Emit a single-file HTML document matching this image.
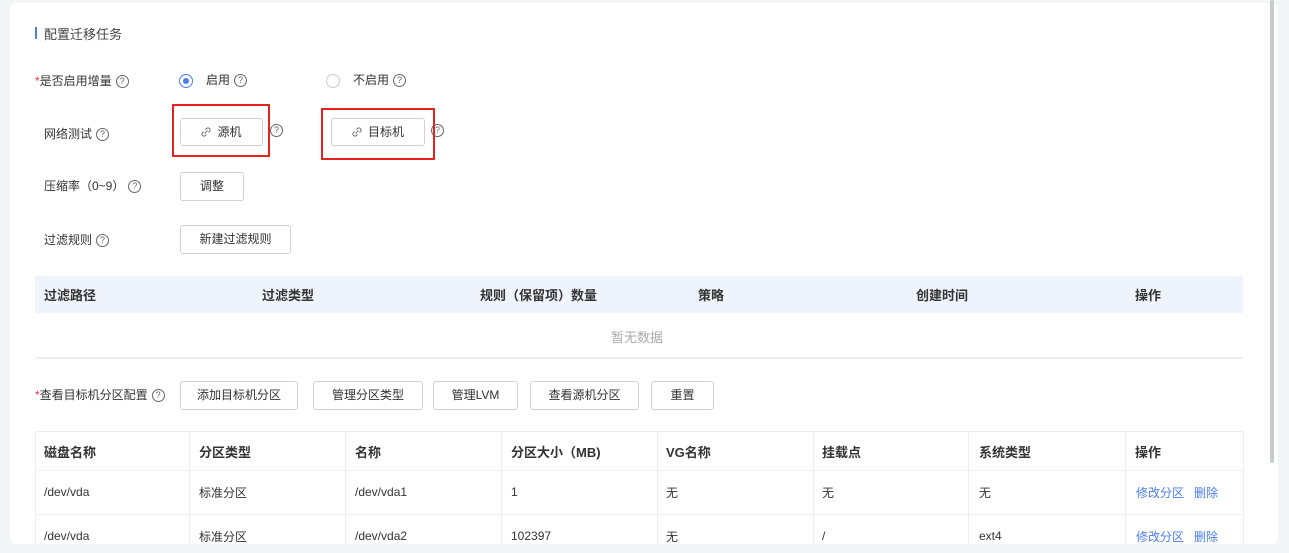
<!DOCTYPE html>
<html><head><meta charset="utf-8"><style>
body{margin:0;width:1289px;height:553px;background:#f4f5f7;font-family:"Liberation Sans","Noto Sans CJK SC",sans-serif;font-size:12px;color:#333;position:relative;overflow:hidden}
.card{position:absolute;left:10px;top:3px;width:1268px;height:541px;background:#fff;border-radius:6px}
.a{position:absolute;white-space:nowrap}
.q{display:inline-block;width:11px;height:11px;border:1px solid #666;border-radius:50%;font-size:9px;line-height:11px;text-align:center;color:#666;vertical-align:1px;margin-left:4px}
.btn{position:absolute;border:1px solid #cfd2d8;border-radius:3px;background:#fff;text-align:center;color:#333;box-sizing:border-box}
.red{position:absolute;border:2px solid #e8231f;box-sizing:border-box}
.th{font-weight:bold;font-size:13px;color:#333}
.hl{position:absolute;background:#eceef2}
.lnk{color:#4a7cf0}
svg.ic{vertical-align:-1px;margin-right:6px}
</style></head><body>
<div class="card"></div>
<div class="a" style="left:1270px;top:0;width:4px;height:463px;background:#c8cacd;border-radius:2px"></div>
<div class="a" style="left:35px;top:27px;width:2px;height:12px;background:#4a7cf0"></div>
<div class="a" style="left:44px;top:24px;font-size:13px;color:#444">配置迁移任务</div>

<div class="a" style="left:35px;top:72px"><span style="color:#e33">*</span>是否启用增量<span class="q">?</span></div>
<div class="a" style="left:179px;top:74px;width:12px;height:12px;border:1px solid #4a7cf0;border-radius:50%"></div>
<div class="a" style="left:183px;top:78px;width:6px;height:6px;background:#4a7cf0;border-radius:50%"></div>
<div class="a" style="left:206px;top:71px">启用<span class="q">?</span></div>
<div class="a" style="left:326px;top:74px;width:12px;height:12px;border:1px solid #ccc;border-radius:50%"></div>
<div class="a" style="left:353px;top:71px">不启用<span class="q">?</span></div>

<div class="a" style="left:44px;top:125px">网络测试<span class="q">?</span></div>
<div class="btn" style="left:180px;top:118px;width:83px;height:28px;line-height:26px"><svg class="ic" width="10" height="10" viewBox="0 0 10 10" fill="none" stroke="#777" stroke-width="1.1"><path d="M4.5 2.5l1-1a2 2 0 0 1 3 3l-1 1M5.5 7.5l-1 1a2 2 0 0 1-3-3l1-1M3.5 6.5l3-3"/></svg>源机</div>
<div class="a" style="left:266px;top:123px"><span class="q">?</span></div>
<div class="btn" style="left:331px;top:118px;width:94px;height:28px;line-height:26px"><svg class="ic" width="10" height="10" viewBox="0 0 10 10" fill="none" stroke="#777" stroke-width="1.1"><path d="M4.5 2.5l1-1a2 2 0 0 1 3 3l-1 1M5.5 7.5l-1 1a2 2 0 0 1-3-3l1-1M3.5 6.5l3-3"/></svg>目标机</div>
<div class="a" style="left:427px;top:123px"><span class="q">?</span></div>
<div class="red" style="left:172px;top:104px;width:98px;height:53px"></div>
<div class="red" style="left:321px;top:108px;width:114px;height:52px"></div>

<div class="a" style="left:44px;top:177px">压缩率（0~9）<span class="q">?</span></div>
<div class="btn" style="left:180px;top:172px;width:64px;height:29px;line-height:27px">调整</div>
<div class="a" style="left:44px;top:231px">过滤规则<span class="q">?</span></div>
<div class="btn" style="left:180px;top:225px;width:111px;height:29px;line-height:27px">新建过滤规则</div>

<div class="a" style="left:35px;top:276px;width:1208px;height:37px;background:#eff3fb"></div>
<div class="a th" style="left:44px;top:285px">过滤路径</div>
<div class="a th" style="left:262px;top:285px">过滤类型</div>
<div class="a th" style="left:480px;top:285px">规则（保留项）数量</div>
<div class="a th" style="left:698px;top:285px">策略</div>
<div class="a th" style="left:916px;top:285px">创建时间</div>
<div class="a th" style="left:1135px;top:285px">操作</div>
<div class="a" style="left:611px;top:327px;font-size:13px;color:#aaa">暂无数据</div>
<div class="hl" style="left:35px;top:357px;width:1208px;height:2px"></div>

<div class="a" style="left:35px;top:386px"><span style="color:#e33">*</span>查看目标机分区配置<span class="q">?</span></div>
<div class="btn" style="left:180px;top:381px;width:118px;height:29px;line-height:27px">添加目标机分区</div>
<div class="btn" style="left:313px;top:381px;width:110px;height:29px;line-height:27px">管理分区类型</div>
<div class="btn" style="left:433px;top:381px;width:85px;height:29px;line-height:27px">管理LVM</div>
<div class="btn" style="left:530px;top:381px;width:109px;height:29px;line-height:27px">查看源机分区</div>
<div class="btn" style="left:651px;top:381px;width:63px;height:29px;line-height:27px">重置</div>

<div class="a" style="left:35px;top:431px;width:1207px;height:120px;border:1px solid #eceef2;border-bottom:none"></div>
<div class="hl" style="left:35px;top:470px;width:1208px;height:1px"></div>
<div class="hl" style="left:35px;top:514px;width:1208px;height:1px"></div>
<div class="hl" style="left:189px;top:431px;width:1px;height:122px"></div>
<div class="hl" style="left:345px;top:431px;width:1px;height:122px"></div>
<div class="hl" style="left:501px;top:431px;width:1px;height:122px"></div>
<div class="hl" style="left:657px;top:431px;width:1px;height:122px"></div>
<div class="hl" style="left:813px;top:431px;width:1px;height:122px"></div>
<div class="hl" style="left:968px;top:431px;width:1px;height:122px"></div>
<div class="hl" style="left:1125px;top:431px;width:1px;height:122px"></div>

<div class="a th" style="left:44px;top:442px">磁盘名称</div>
<div class="a th" style="left:199px;top:442px">分区类型</div>
<div class="a th" style="left:355px;top:442px">名称</div>
<div class="a th" style="left:511px;top:442px">分区大小（MB)</div>
<div class="a th" style="left:666px;top:442px">VG名称</div>
<div class="a th" style="left:822px;top:442px">挂载点</div>
<div class="a th" style="left:979px;top:442px">系统类型</div>
<div class="a th" style="left:1135px;top:442px">操作</div>

<div class="a" style="left:44px;top:485px">/dev/vda</div>
<div class="a" style="left:199px;top:484px">标准分区</div>
<div class="a" style="left:355px;top:485px">/dev/vda1</div>
<div class="a" style="left:511px;top:485px">1</div>
<div class="a" style="left:666px;top:484px">无</div>
<div class="a" style="left:822px;top:484px">无</div>
<div class="a" style="left:979px;top:484px">无</div>
<div class="a lnk" style="left:1136px;top:484px">修改分区&nbsp;&nbsp;&nbsp;删除</div>

<div class="a" style="left:44px;top:529px">/dev/vda</div>
<div class="a" style="left:199px;top:528px">标准分区</div>
<div class="a" style="left:355px;top:529px">/dev/vda2</div>
<div class="a" style="left:511px;top:529px">102397</div>
<div class="a" style="left:666px;top:528px">无</div>
<div class="a" style="left:822px;top:529px">/</div>
<div class="a" style="left:979px;top:529px">ext4</div>
<div class="a lnk" style="left:1136px;top:528px">修改分区&nbsp;&nbsp;&nbsp;删除</div>
<div class="a" style="left:0;top:544px;width:1289px;height:9px;background:#f4f5f7"></div>
</body></html>
